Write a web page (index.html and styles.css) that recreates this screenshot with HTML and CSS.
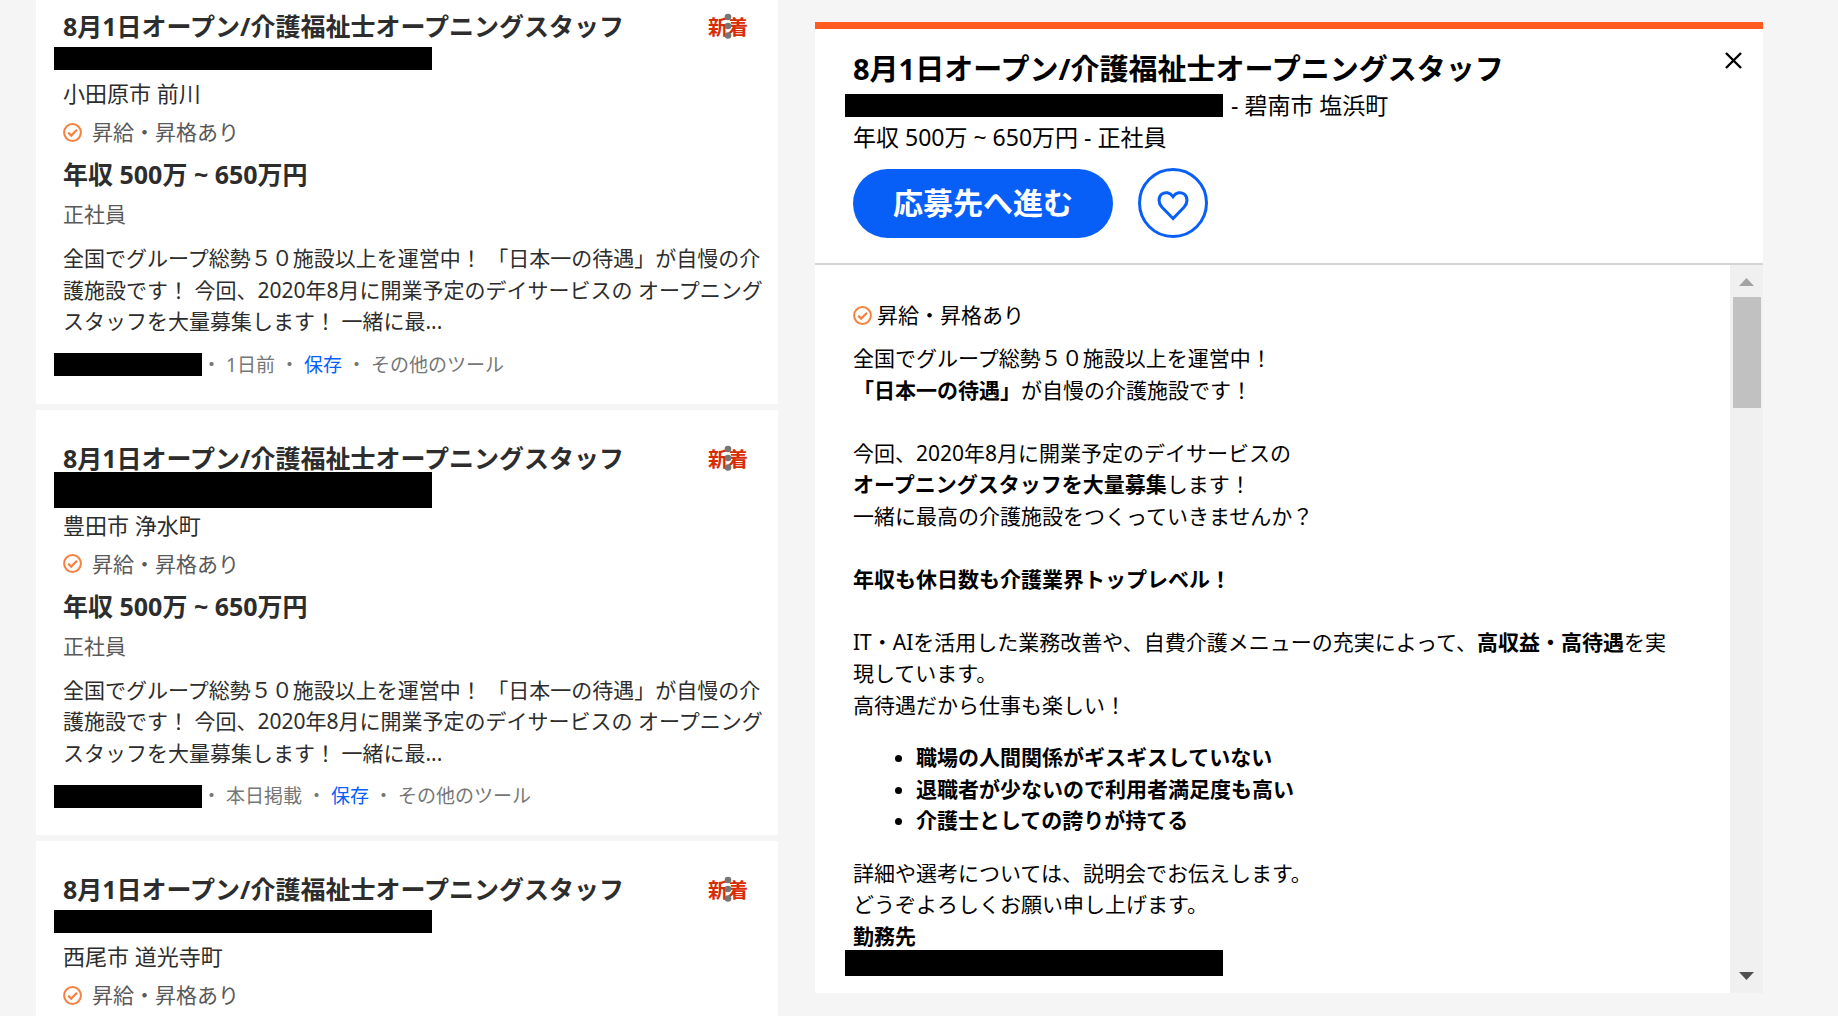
FILE: index.html
```
<!DOCTYPE html>
<html lang="ja">
<head>
    <meta charset="UTF-8">
    <meta name="viewport" content="width=device-width, initial-scale=1.0">
    <title>介護福祉士オープニングスタッフ</title>
    <link rel="stylesheet" href="styles.css">
</head>
<body>

<!-- Shared icons -->
<svg class="sprite" aria-hidden="true">
    <symbol id="icon-check" viewBox="0 0 19 19">
        <circle cx="9.5" cy="9.5" r="8.4" fill="none" stroke="#f58140" stroke-width="2"/>
        <path d="M5.2 9.6l3 3 5.8-5.9" fill="none" stroke="#f58140" stroke-width="2.2"/>
    </symbol>
    <symbol id="icon-dots" viewBox="0 0 8 28">
        <circle cx="4" cy="5" r="3.3"/>
        <circle cx="4" cy="14" r="3.3"/>
        <circle cx="4" cy="23.500" r="3.3"/>
    </symbol>
</svg>

<div class="page">

    <!-- Job list -->
    <main class="job-list">
        <article class="card">
            <div class="card-header">
                <h2>8月1日オープン/介護福祉士オープニングスタッフ</h2>
                <div class="badge">
                    <span class="new">新着</span>
                    <button class="menu" aria-label="メニュー"><svg><use href="#icon-dots"/></svg></button>
                </div>
            </div>
            <div class="redacted"></div>
            <div class="location">小田原市 前川</div>
            <div class="perk"><svg><use href="#icon-check"/></svg>昇給・昇格あり</div>
            <div class="salary">年収 500万 ~ 650万円</div>
            <div class="job-type">正社員</div>
            <p class="summary">全国でグループ総勢５０施設以上を運営中！ 「日本一の待遇」が自慢の介護施設です！ 今回、2020年8月に開業予定のデイサービスの オープニングスタッフを大量募集します！ 一緒に最...</p>
            <div class="card-footer">
                <span class="redacted-source"></span>
                <span>・</span>
                <span>1日前</span>
                <span>・</span>
                <a href="#" class="save">保存</a>
                <span>・</span>
                <a href="#">その他のツール</a>
            </div>
        </article>

        <article class="card">
            <div class="card-header">
                <h2>8月1日オープン/介護福祉士オープニングスタッフ</h2>
                <div class="badge">
                    <span class="new">新着</span>
                    <button class="menu" aria-label="メニュー"><svg><use href="#icon-dots"/></svg></button>
                </div>
            </div>
            <div class="redacted tall"></div>
            <div class="location">豊田市 浄水町</div>
            <div class="perk"><svg><use href="#icon-check"/></svg>昇給・昇格あり</div>
            <div class="salary">年収 500万 ~ 650万円</div>
            <div class="job-type">正社員</div>
            <p class="summary">全国でグループ総勢５０施設以上を運営中！ 「日本一の待遇」が自慢の介護施設です！ 今回、2020年8月に開業予定のデイサービスの オープニングスタッフを大量募集します！ 一緒に最...</p>
            <div class="card-footer">
                <span class="redacted-source"></span>
                <span>・</span>
                <span>本日掲載</span>
                <span>・</span>
                <a href="#" class="save">保存</a>
                <span>・</span>
                <a href="#">その他のツール</a>
            </div>
        </article>

        <article class="card">
            <div class="card-header">
                <h2>8月1日オープン/介護福祉士オープニングスタッフ</h2>
                <div class="badge">
                    <span class="new">新着</span>
                    <button class="menu" aria-label="メニュー"><svg><use href="#icon-dots"/></svg></button>
                </div>
            </div>
            <div class="redacted"></div>
            <div class="location">西尾市 道光寺町</div>
            <div class="perk"><svg><use href="#icon-check"/></svg>昇給・昇格あり</div>
        </article>
    </main>

    <!-- Job detail -->
    <aside class="detail">
        <header class="detail-header">
            <div class="detail-title">
                <h1>8月1日オープン/介護福祉士オープニングスタッフ</h1>
                <button class="close" aria-label="閉じる">
                    <svg viewBox="0 0 17 17"><path d="M1 1l15 15M16 1L1 16" stroke="#000" stroke-width="2.4"/></svg>
                </button>
            </div>
            <div class="detail-company"><span class="redacted-name"></span>- 碧南市 塩浜町</div>
            <div class="detail-salary">年収 500万 ~ 650万円 - 正社員</div>
            <div class="actions">
                <button class="apply">応募先へ進む</button>
                <button class="favorite" aria-label="保存">
                    <svg viewBox="0 0 32 32"><path d="M16 29.500L5 18.300C1.200 14.200 1 8.200 4.700 5.200 8 2.500 13 3.300 16 7.700c3-4.400 8-5.200 11.300-2.500 3.700 3 3.500 9-.3 13.100z" fill="none" stroke="#085ff7" stroke-width="3"/></svg>
                </button>
            </div>
        </header>
        <div class="detail-body">
            <div class="description">
                <div class="perk"><svg><use href="#icon-check"/></svg>昇給・昇格あり</div>
                <p>
                    全国でグループ総勢５０施設以上を運営中！<br>
                    <b>「日本一の待遇」</b>が自慢の介護施設です！<br>
                    <br>
                    今回、2020年8月に開業予定のデイサービスの<br>
                    <b>オープニングスタッフを大量募集</b>します！<br>
                    一緒に最高の介護施設をつくっていきませんか？<br>
                    <br>
                    <b>年収も休日数も介護業界トップレベル！</b><br>
                    <br>
                    IT・AIを活用した業務改善や、自費介護メニューの充実によって、<b>高収益・高待遇</b>を実現しています。<br>
                    高待遇だから仕事も楽しい！
                </p>
                <ul>
                    <li>職場の人間関係がギスギスしていない</li>
                    <li>退職者が少ないので利用者満足度も高い</li>
                    <li>介護士としての誇りが持てる</li>
                </ul>
                <p>
                    詳細や選考については、説明会でお伝えします。<br>
                    どうぞよろしくお願い申し上げます。<br>
                    <b>勤務先</b>
                </p>
                <div class="redacted-workplace"></div>
            </div>
            <div class="scrollbar" aria-hidden="true">
                <svg viewBox="0 0 15 8"><path d="M0 8L7.500 0 15 8z" fill="#a3a3a3"/></svg>
                <div class="thumb"></div>
                <svg class="down" viewBox="0 0 15 8"><path d="M0 0h15L7.500 8z" fill="#505050"/></svg>
            </div>
        </div>
    </aside>

</div>

</body>
</html>
```
FILE: styles.css
```
:root {
    --page-bg: #f5f5f5;
    --text-color: #2d2d2d;
    --muted-color: #595959;
    --blue: #085ff7;
    --orange: #ff5a1f;
}

* {
    box-sizing: border-box;
}

body {
    margin: 0;
    font-family: "Noto Sans", "Noto Sans CJK JP", sans-serif;
    font-size: 21px;
    line-height: 1.5;
    background-color: var(--page-bg);
    color: var(--text-color);
}

h1, h2, p {
    margin: 0;
}

button {
    padding: 0;
    border: none;
    background: none;
    font-family: inherit;
    cursor: pointer;
}

.sprite {
    display: none;
}

.page {
    display: grid;
    grid-template-columns: 742fr 948fr;
    grid-template-rows: minmax(0, 1fr);
    gap: 37px;
    height: 100vh;
    padding: 0 75px 0 36px;
    overflow: hidden;
}

/* Job list */
.job-list {
    display: flex;
    flex-direction: column;
    gap: 6px;
    min-width: 0;
    margin-top: -22px;
}

.card {
    flex-shrink: 0;
    padding: 30px 10px 25px 27px;
    background-color: #fff;
}

.card-header {
    display: flex;
    align-items: center;
    justify-content: space-between;
    height: 36px;
    padding-right: 20px;
}

.card-header h2 {
    font-size: 25px;
    line-height: 36px;
    white-space: nowrap;
}

.badge {
    position: relative;
    flex-shrink: 0;
    padding-top: 3px;
    line-height: 30px;
}

.new {
    color: #d92b04;
    font-size: 20px;
    font-weight: bold;
}

/* Menu dots sit on top of the badge */
.menu {
    position: absolute;
    inset: 0;
    display: flex;
    align-items: center;
    justify-content: center;
}

.menu svg {
    width: 8px;
    height: 28px;
    fill: #767676;
}

.redacted {
    width: 378px;
    height: 23px;
    margin: 3px 0 8px -9px;
    background-color: #000;
}

.redacted.tall {
    position: relative;
    height: 36px;
    margin-top: -4px;
    margin-bottom: 2px;
}

.location {
    font-size: 22px;
    line-height: 31px;
}

.perk {
    display: flex;
    align-items: center;
    gap: 10px;
    margin-top: 8px;
    line-height: 30px;
    color: var(--muted-color);
}

.perk svg {
    width: 19px;
    height: 19px;
}

.salary {
    margin-top: 9px;
    font-size: 25px;
    font-weight: bold;
    line-height: 36px;
}

.job-type {
    margin-top: 7px;
    line-height: 30px;
    color: var(--muted-color);
}

.summary {
    margin-top: 14px;
}

.card-footer {
    display: flex;
    align-items: center;
    gap: 5px;
    margin-top: 13px;
    font-size: 19px;
    line-height: 28px;
    color: #767676;
}

.card-footer a {
    color: inherit;
    text-decoration: none;
}

.card-footer .save {
    color: var(--blue);
}

.redacted-source {
    width: 148px;
    height: 23px;
    margin: 0 -5px 0 -9px;
    background-color: #000;
}

/* Job detail */
.detail {
    display: flex;
    flex-direction: column;
    min-width: 0;
    min-height: 0;
    margin: 22px 0 23px;
    border-top: 7px solid var(--orange);
    background-color: #fff;
    color: #000;
}

.detail-header {
    padding: 19px 21px 25px 38px;
    border-bottom: 2px solid #d4d4d4;
}

.detail-title {
    display: flex;
    align-items: flex-start;
    justify-content: space-between;
}

.detail-title h1 {
    font-size: 29px;
    line-height: 41px;
    white-space: nowrap;
}

.close {
    display: flex;
    padding-top: 4px;
}

.close svg {
    width: 17px;
    height: 17px;
}

.detail-company {
    display: flex;
    align-items: center;
    font-size: 23px;
    line-height: 32px;
}

.redacted-name {
    width: 378px;
    height: 23px;
    margin: 0 8px 0 -8px;
    background-color: #000;
}

.detail-salary {
    font-size: 23px;
    line-height: 32px;
}

.actions {
    display: flex;
    align-items: center;
    gap: 25px;
    margin-top: 15px;
}

.apply {
    width: 260px;
    height: 69px;
    padding-bottom: 4px;
    border-radius: 35px;
    background-color: var(--blue);
    color: #fff;
    font-size: 30px;
    font-weight: bold;
}

.favorite {
    display: flex;
    align-items: center;
    justify-content: center;
    width: 70px;
    height: 70px;
    padding-top: 4px;
    border: 3px solid var(--blue);
    border-radius: 50%;
}

.favorite svg {
    width: 32px;
    height: 32px;
}

.detail-body {
    display: flex;
    flex: 1;
    min-height: 0;
}

.description {
    flex: 1;
    padding: 35px 44px 0 38px;
    overflow: hidden;
}

.description .perk {
    gap: 5px;
    margin: 0 0 13px;
    color: #000;
}

.description ul {
    margin: 21px 0;
    padding-left: 63px;
    font-weight: bold;
}

.redacted-workplace {
    width: 378px;
    height: 26px;
    margin: -2px 0 0 -8px;
    background-color: #000;
}

.scrollbar {
    display: flex;
    flex-direction: column;
    align-items: center;
    width: 33px;
    padding: 13px 0;
    background-color: #f0f0f0;
}

.scrollbar svg {
    width: 15px;
    height: 8px;
}

.scrollbar .thumb {
    width: 28px;
    height: 111px;
    margin-top: 11px;
    background-color: #c1c1c1;
}

.scrollbar .down {
    margin-top: auto;
}
```
